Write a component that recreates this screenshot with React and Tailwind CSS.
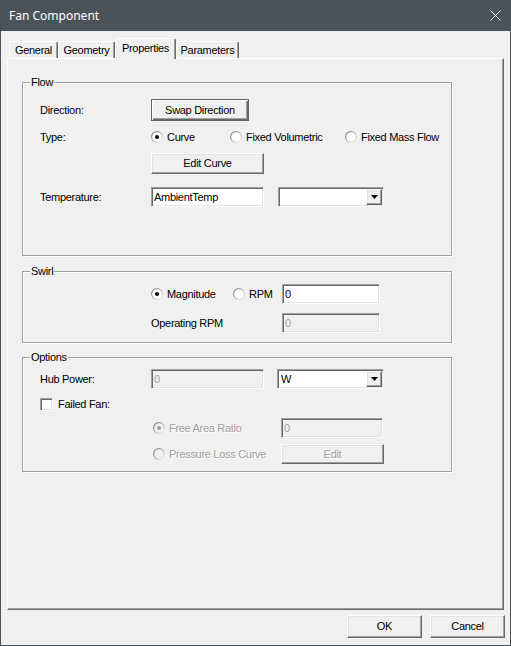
import React, { useId } from "react";

// classic win32 bevels
const sunken =
  "border border-t-[#a0a0a0] border-l-[#a0a0a0] border-r-white border-b-white shadow-[inset_1px_1px_0_#696969,inset_-1px_-1px_0_#e3e3e3]";
const raised =
  "border border-t-white border-l-white border-r-[#696969] border-b-[#696969] shadow-[inset_-1px_-1px_0_#a0a0a0,inset_1px_1px_0_#e3e3e3]";
const grayText = "text-[#a0a0a0] [text-shadow:1px_1px_0_#fff]";

function Radio({ checked, disabled }) {
  const id = "rg" + useId().replace(/[^a-zA-Z0-9]/g, "");
  return (
    <svg width="12" height="12" viewBox="0 0 12 12" className="shrink-0">
      <defs>
        <linearGradient id={id} x1="0" y1="0" x2="1" y2="1">
          <stop offset="0" stopColor="#6d6d6d" />
          <stop offset="1" stopColor="#ffffff" />
        </linearGradient>
      </defs>
      <circle cx="6" cy="6" r="6" fill={`url(#${id})`} />
      <circle cx="6" cy="6" r="4.8" fill={disabled ? "#f0f0f0" : "#ffffff"} />
      {checked && <circle cx="6" cy="6" r="2" fill={disabled ? "#a0a0a0" : "#000000"} />}
    </svg>
  );
}

function Option({ label, checked, disabled, className = "" }) {
  return (
    <div className={`flex items-center gap-[4px] ${className}`}>
      <Radio checked={checked} disabled={disabled} />
      <span className={disabled ? grayText : ""}>{label}</span>
    </div>
  );
}

function Button({ children, className = "", disabled, isDefault }) {
  const frame = isDefault
    ? "border border-[#646464] shadow-[inset_1px_1px_0_#fff,inset_-1px_-1px_0_#696969,inset_-2px_-2px_0_#a0a0a0]"
    : raised;
  return (
    <div className={`flex items-center justify-center bg-[#f0f0f0] ${frame} ${disabled ? grayText : ""} ${className}`}>
      {children}
    </div>
  );
}

function TextField({ value, disabled, className = "" }) {
  return (
    <div
      className={`h-[20px] flex items-center pl-[2px] ${sunken} ${
        disabled ? "bg-[#f0f0f0] text-[#a0a0a0]" : "bg-white"
      } ${className}`}
    >
      {value}
    </div>
  );
}

function Combo({ value, className = "" }) {
  return (
    <div className={`h-[20px] flex p-px bg-white ${sunken} ${className}`}>
      <span className="flex-1 pl-[2px] flex items-center">{value}</span>
      <div className={`w-[16px] flex items-center justify-center bg-[#f0f0f0] ${raised}`}>
        <svg width="7" height="4" viewBox="0 0 7 4">
          <polygon points="0,0 7,0 3.5,4" fill="#000" />
        </svg>
      </div>
    </div>
  );
}

function Group({ title, className = "", children }) {
  return (
    <div
      className={`relative ml-[14px] w-[430px] border border-[#a0a0a0] shadow-[1px_1px_0_#fff,inset_1px_1px_0_#fff] ${className}`}
    >
      <span className="absolute left-[7px] -top-[8px] bg-[#f0f0f0] px-px leading-[14px]">{title}</span>
      {children}
    </div>
  );
}

function Tab({ label, selected, className = "" }) {
  return (
    <div
      className={`flex items-center justify-center bg-[#f0f0f0] border-t border-l border-r border-t-white border-l-white border-r-[#696969] shadow-[inset_-1px_0_0_#a0a0a0] rounded-t-[2px] ${
        selected ? "relative z-10 h-[21px] -mb-px pb-[2px]" : "h-[17px]"
      } ${className}`}
    >
      {label}
    </div>
  );
}

export default function App() {
  return (
    <div className="w-[511px] h-[646px] flex flex-col bg-[#f0f0f0] border-x border-b border-[#4b5359] text-[11px] tracking-[-0.3px] text-black font-['Liberation_Sans',Arial,sans-serif] select-none">
      {/* title bar */}
      <div className="h-[31px] shrink-0 flex items-center justify-between pl-[8px] pr-[9px] bg-[#4b5359] text-white text-[12px] tracking-normal font-['Noto_Sans',sans-serif]">
        <span>Fan Component</span>
        <svg width="11" height="11" viewBox="0 0 11 11">
          <path d="M0.5 0.5 L10.5 10.5 M10.5 0.5 L0.5 10.5" stroke="#fff" strokeWidth="1" />
        </svg>
      </div>

      {/* tabs */}
      <div className="mt-[7px] h-[20px] shrink-0 flex items-end pl-[8px]">
        <Tab label="General" className="w-[49px]" />
        <Tab label="Geometry" className="w-[57px]" />
        <Tab label="Properties" selected className="w-[61px]" />
        <Tab label="Parameters" className="w-[63px]" />
      </div>

      {/* tab page */}
      <div className="ml-[6px] w-[497px] flex-1 flex flex-col border border-t-white border-l-white border-r-[#696969] border-b-[#696969] shadow-[inset_-1px_-1px_0_#a0a0a0]">
        <Group title="Flow" className="mt-[23px] h-[174px] pl-[17px] pt-[16px]">
          <div className="h-[22px] flex items-center">
            <span className="w-[111px]">Direction:</span>
            <Button isDefault className="w-[98px] h-[22px]">Swap Direction</Button>
          </div>
          <div className="mt-[8px] h-[16px] flex items-center">
            <span className="w-[111px]">Type:</span>
            <Option label="Curve" checked className="w-[79px]" />
            <Option label="Fixed Volumetric" className="w-[115px]" />
            <Option label="Fixed Mass Flow" />
          </div>
          <div className="mt-[8px] flex">
            <span className="w-[111px]" />
            <Button className="w-[113px] h-[21px]">Edit Curve</Button>
          </div>
          <div className="mt-[13px] h-[20px] flex items-center">
            <span className="w-[111px]">Temperature:</span>
            <TextField value="AmbientTemp" className="w-[113px]" />
            <Combo value="" className="ml-[14px] w-[106px]" />
          </div>
        </Group>

        <Group title="Swirl" className="mt-[15px] h-[72px] pl-[128px] pt-[12px]">
          <div className="h-[20px] flex items-center">
            <Option label="Magnitude" checked className="w-[82px]" />
            <Option label="RPM" className="w-[49px]" />
            <TextField value="0" className="w-[98px]" />
          </div>
          <div className="mt-[9px] h-[20px] flex items-center">
            <span className="w-[131px]">Operating RPM</span>
            <TextField value="0" disabled className="w-[98px]" />
          </div>
        </Group>

        <Group title="Options" className="mt-[14px] h-[115px] pl-[17px] pt-[11px]">
          <div className="h-[20px] flex items-center">
            <span className="w-[111px]">Hub Power:</span>
            <TextField value="0" disabled className="w-[113px]" />
            <Combo value="W" className="ml-[13px] w-[107px]" />
          </div>
          <div className="mt-[9px] h-[13px] flex items-center gap-[5px]">
            <div className={`w-[13px] h-[13px] bg-white ${sunken}`} />
            <span>Failed Fan:</span>
          </div>
          <div className="mt-[7px] h-[20px] flex items-center">
            <span className="w-[111px]" />
            <Option label="Free Area Ratio" checked disabled className="w-[130px] pl-[2px]" />
            <TextField value="0" disabled className="w-[102px]" />
          </div>
          <div className="mt-[6px] h-[20px] flex items-center">
            <span className="w-[111px]" />
            <Option label="Pressure Loss Curve" disabled className="w-[130px] pl-[2px]" />
            <Button disabled className="w-[103px] h-[20px]">Edit</Button>
          </div>
        </Group>
      </div>

      {/* dialog buttons */}
      <div className="mt-[5px] mb-[7px] h-[23px] shrink-0 flex justify-end gap-[8px] pr-[5px]">
        <Button className="w-[75px] h-[23px]">OK</Button>
        <Button className="w-[75px] h-[23px]">Cancel</Button>
      </div>
    </div>
  );
}
